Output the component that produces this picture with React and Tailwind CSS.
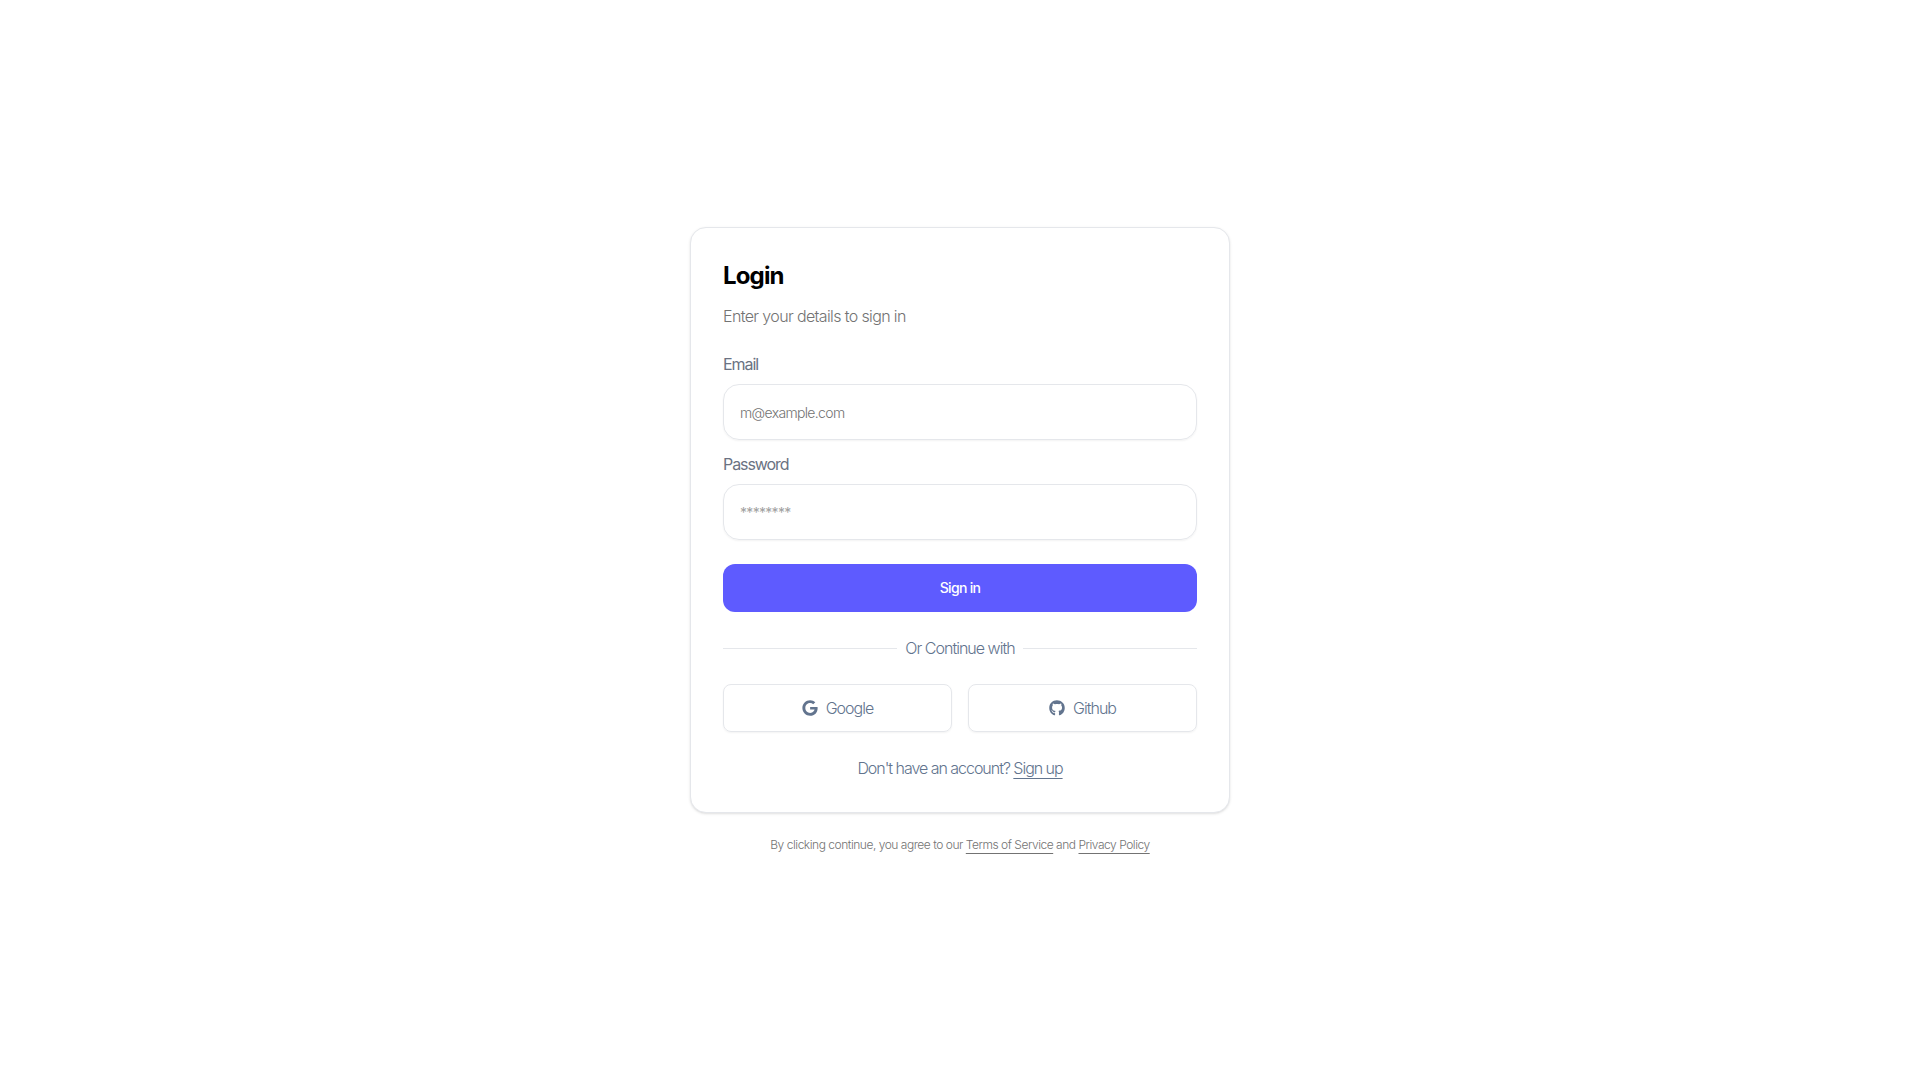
import React from "react";
import { FaGoogle, FaGithub } from "react-icons/fa";

const App = () => {
    return (
        <div className="min-h-screen bg-white flex flex-col items-center justify-center font-['Inter',sans-serif]">
            <div className="w-[540px] bg-white border border-gray-200 rounded-2xl shadow-sm p-8">

                {/* Heading */}
                <h1 className="text-2xl font-bold text-black tracking-[-0.85px]">Login</h1>
                <p className="text-base font-light text-neutral-500 tracking-[-0.63px] mt-3">Enter your details to sign in</p>

                {/* Fields */}
                <div className="mt-6">
                    <label className="block text-base text-gray-500 tracking-[-1.08px] mb-2">Email</label>
                    <input
                        type="email"
                        placeholder="m@example.com"
                        className="w-full h-14 px-4 text-sm font-light tracking-[-0.66px] border border-gray-200 rounded-2xl shadow-xs outline-none placeholder:text-neutral-500"
                    />
                </div>
                <div className="mt-3">
                    <label className="block text-base text-gray-500 tracking-[-1.08px] mb-2">Password</label>
                    <input
                        type="password"
                        placeholder="********"
                        className="w-full h-14 px-4 text-sm tracking-[-0.7px] border border-gray-200 rounded-2xl shadow-xs outline-none placeholder:text-neutral-400"
                    />
                </div>

                <button className="w-full h-12 mt-6 rounded-xl bg-[#5e5bff] text-white text-sm font-medium tracking-[-0.7px]">
                    Sign in
                </button>

                {/* Divider */}
                <div className="flex items-center gap-2 mt-6 text-base font-light text-slate-500 tracking-[-0.98px]">
                    <div className="flex-1 h-px bg-gray-200"></div>
                    <span>Or Continue with</span>
                    <div className="flex-1 h-px bg-gray-200"></div>
                </div>

                {/* Social */}
                <div className="grid grid-cols-2 gap-4 mt-6">
                    <button className="h-12 flex items-center justify-center gap-2 border border-gray-200 rounded-lg shadow-xs text-base font-light text-slate-500 tracking-[-0.98px]">
                        <FaGoogle className="w-4 h-4" />
                        Google
                    </button>
                    <button className="h-12 flex items-center justify-center gap-2 border border-gray-200 rounded-lg shadow-xs text-base font-light text-slate-500 tracking-[-0.98px]">
                        <FaGithub className="w-4 h-4" />
                        Github
                    </button>
                </div>

                <p className="text-center text-base font-light text-slate-500 tracking-[-1.03px] mt-6">
                    Don't have an account? <a href="#" className="underline underline-offset-4">Sign up</a>
                </p>
            </div>

            <p className="mt-6 text-xs font-light text-neutral-500 tracking-[-0.47px]">
                By clicking continue, you agree to our{" "}
                <a href="#" className="underline underline-offset-4">Terms of Service</a> and{" "}
                <a href="#" className="underline underline-offset-4">Privacy Policy</a>
            </p>
        </div>
    );
};

export default App;
